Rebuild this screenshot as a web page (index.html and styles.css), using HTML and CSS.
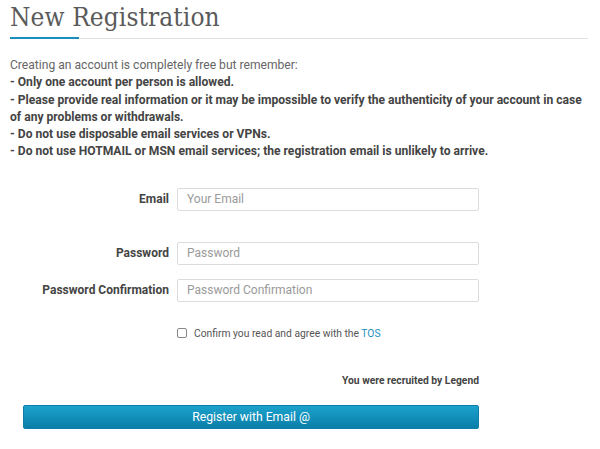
FILE: index.html
```html
<!DOCTYPE html>
<html>
<head>
<meta charset="utf-8">
<link rel="stylesheet" href="styles.css">
</head>
<body>
<div class="page">
  <div class="title-wrap">
    <h1 class="title">New Registration</h1>
  </div>
  <div class="intro">
    <div>Creating an account is completely free but remember:</div>
    <div class="strong">- Only one account per person is allowed.</div>
    <div class="strong">- Please provide real information or it may be impossible to verify the authenticity of your account in case of any problems or withdrawals.</div>
    <div class="strong">- Do not use disposable email services or VPNs.</div>
    <div class="strong">- Do not use HOTMAIL or MSN email services; the registration email is unlikely to arrive.</div>
  </div>
  <form class="form">
    <label class="label" for="email">Email</label>
    <input class="input" id="email" type="text" placeholder="Your Email">
    <div class="spacer"></div>
    <label class="label" for="pw">Password</label>
    <input class="input" id="pw" type="password" placeholder="Password">
    <label class="label" for="pw2">Password Confirmation</label>
    <input class="input" id="pw2" type="password" placeholder="Password Confirmation">
    <div class="check-row">
      <span class="checkbox"></span>
      <span class="check-text">Confirm you read and agree with the <a class="link" href="#">TOS</a></span>
    </div>
    <div class="recruit">You were recruited by Legend</div>
    <button class="btn" type="button">Register with Email @</button>
  </form>
</div>
</body>
</html>
```
FILE: styles.css
```css
* { box-sizing: border-box; }
html, body { margin: 0; padding: 0; background: #fff; }
body { font-family: Roboto, "Noto Sans", sans-serif; color: #555; }
.page { padding: 0 12px 0 10px; width: 600px; }
.title-wrap {
  position: relative;
  border-bottom: 1px solid #e2e2e2;
  height: 39px;
}
.title-wrap::after {
  content: "";
  position: absolute;
  left: 0;
  bottom: -1px;
  width: 69px;
  height: 2px;
  background: #1a8fbd;
}
.title {
  margin: 0;
  padding-top: 1px;
  font-family: "DejaVu Serif Condensed", "DejaVu Serif", serif;
  font-weight: normal;
  font-size: 26px;
  line-height: 32px;
  color: #5a5a5a;
  letter-spacing: 0.1px;
}
.intro {
  margin-top: 18px;
  font-size: 12.1px;
  line-height: 17.3px;
  color: #666;
}
.intro .strong { font-weight: bold; color: #444; }
.form {
  margin: 27px 0 0 13px;
  display: grid;
  grid-template-columns: 146px 302px;
  grid-auto-rows: auto;
  column-gap: 8px;
  row-gap: 14px;
  align-items: center;
}
.label {
  text-align: right;
  font-size: 12px;
  font-weight: bold;
  color: #444;
}
.input {
  height: 23px;
  border: 1px solid #dcdcdc;
  border-radius: 2px;
  padding: 0 9px;
  font-family: Roboto, sans-serif;
  font-size: 12px;
  color: #555;
  outline: none;
}
.input::placeholder { color: #9a9a9a; }
.spacer { grid-column: 1 / 3; height: 3px; }
.check-row {
  grid-column: 2;
  display: flex;
  align-items: center;
  gap: 7px;
  margin-top: 11px;
}
.checkbox {
  display: inline-block;
  width: 10px;
  height: 10px;
  border: 1px solid #888;
  border-radius: 2px;
}
.check-text { font-size: 10.3px; color: #555; }
.link { color: #1a8fbd; text-decoration: none; }
.recruit {
  grid-column: 1 / 3;
  text-align: right;
  font-size: 10.3px;
  font-weight: bold;
  color: #444;
  margin-top: 20px;
}
.btn {
  grid-column: 1 / 3;
  height: 24px;
  margin-top: 4px;
  border: 1px solid #0d7ea8;
  border-radius: 2px;
  background: linear-gradient(#1ba2cc, #0b7ea9);
  color: #fff;
  font-family: Roboto, sans-serif;
  font-size: 12.2px;
  cursor: pointer;
}
```
